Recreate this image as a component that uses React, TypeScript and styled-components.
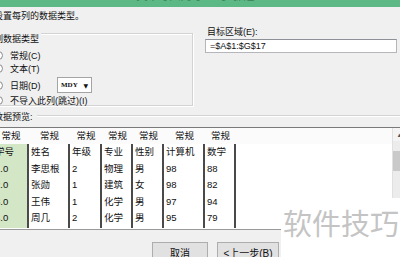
import React from "react";
import styled, { createGlobalStyle } from "styled-components";

const GlobalStyle = createGlobalStyle`
  html, body { margin: 0; padding: 0; background: #f0f0f0; }
  body { font-family: "Liberation Sans", "Noto Sans CJK SC", sans-serif; }
`;

const Page = styled.div`
  position: relative;
  width: 400px;
  height: 257px;
  overflow: hidden;
  background: #f0f0f0;
  color: #111;
`;

const TitleBar = styled.div`
  height: 7px;
  overflow: hidden;
  background: #5cb985;
  text-align: center;
  .title {
    display: block;
    margin-top: -10px;
    line-height: 12px;
    font-size: 11px;
    color: #3c7d55;
  }
`;

const Instruction = styled.div`
  margin: 2px 0 0 -6px;
  height: 14px;
  line-height: 14px;
  font-size: 9px;
  white-space: nowrap;
`;

const TopSection = styled.div`
  display: flex;
  align-items: flex-start;
  height: 84px;
`;

const GroupBox = styled.div`
  box-sizing: border-box;
  margin: 10px 0 0 -20px;
  width: 213px;
  height: 73px;
  border: 1px solid #d3d3d3;
  box-shadow: inset 1px 1px 0 #fff, 1px 1px 0 #fff;
  font-size: 9px;
`;

const Legend = styled.div`
  display: inline-block;
  margin: -8px 0 0 11px;
  padding: 0 2px;
  line-height: 12px;
  background: #f0f0f0;
  white-space: nowrap;
`;

const RadioList = styled.div`
  display: flex;
  flex-direction: column;
  margin-top: 4px;
  padding-left: 13px;
`;

const RadioRow = styled.div<{ $h: number; $mt?: number }>`
  display: flex;
  align-items: center;
  height: ${(p) => p.$h}px;
  margin-top: ${(p) => p.$mt ?? 0}px;
  white-space: nowrap;
`;

const Radio = styled.span<{ $checked?: boolean }>`
  box-sizing: border-box;
  width: 9px;
  height: 9px;
  margin-right: 7px;
  border: 1px solid #8a8a8a;
  border-radius: 50%;
  background: #fff;
  display: flex;
  align-items: center;
  justify-content: center;
  &::after {
    content: "";
    width: 3px;
    height: 3px;
    border-radius: 50%;
    background: ${(p) => (p.$checked ? "#222" : "transparent")};
  }
`;

const DateLabel = styled.span`
  width: 47px;
`;

const Select = styled.div`
  box-sizing: border-box;
  width: 35px;
  height: 16px;
  padding: 0 3px 0 3px;
  border: 1px solid #a4a4a4;
  background: #fff;
  display: flex;
  align-items: center;
  justify-content: space-between;
  font-family: "Liberation Serif", serif;
  font-weight: bold;
  font-size: 7px;
  .arrow { font-size: 6px; font-family: "DejaVu Sans", sans-serif; }
`;

const TargetPanel = styled.div`
  margin: 3px 0 0 12px;
  width: 192px;
  font-size: 9px;
`;

const TargetLabel = styled.div`
  line-height: 12px;
  padding-left: 2px;
  white-space: nowrap;
`;

const TextInput = styled.div`
  box-sizing: border-box;
  margin-top: 1px;
  height: 14px;
  padding-left: 4px;
  border: 1px solid #b4b6bb;
  border-top-color: #8d9096;
  background: #fff;
  line-height: 12px;
  font-size: 9px;
`;

const PreviewHeader = styled.div`
  display: flex;
  align-items: center;
  margin: 3px 0 0 -6px;
  height: 12px;
  font-size: 9px;
  white-space: nowrap;
  .line {
    flex: 1;
    margin-left: 4px;
    border-top: 1px solid #d3d3d3;
    border-bottom: 1px solid #fff;
  }
`;

const TableBox = styled.div`
  box-sizing: border-box;
  display: flex;
  margin: 5px 0 0 -8px;
  width: 415px;
  height: 103px;
  border: 1px solid #9a9a9a;
  border-top-color: #7a7a7a;
  background: #fff;
`;

const Grid = styled.div`
  flex: 1;
  font-size: 9.5px;
`;

const HeaderRow = styled.div`
  display: flex;
  height: 16px;
  background: #fbfbfb;
`;

const HeaderCell = styled.div<{ $w: number }>`
  width: ${(p) => p.$w}px;
  flex-shrink: 0;
  line-height: 16px;
  text-align: center;
  white-space: nowrap;
`;

const Body = styled.div`
  display: flex;
`;

const Column = styled.div<{ $w: number; $selected?: boolean }>`
  box-sizing: border-box;
  width: ${(p) => p.$w}px;
  flex-shrink: 0;
  padding-bottom: 1.5px;
  border-right: 2px solid #4a4a4a;
  background: ${(p) => (p.$selected ? "#d3e6c5" : "#fff")};
`;

const Cell = styled.div`
  height: 16.5px;
  line-height: 16.5px;
  padding-left: 2px;
  white-space: nowrap;
  overflow: hidden;
`;

const Scrollbar = styled.div`
  width: 13px;
  background: #ececec;
  display: flex;
  flex-direction: column;
  border-left: 1px solid #e0e0e0;
  .up {
    height: 13px;
    display: flex;
    align-items: center;
    justify-content: center;
    font-size: 6px;
    color: #555;
    background: #f4f4f4;
  }
  .thumb {
    margin-top: 10px;
    height: 20px;
    background: #c9c9c9;
  }
`;

const ButtonRow = styled.div`
  display: flex;
  gap: 9px;
  margin-top: 12px;
  padding-left: 152px;
`;

const Button = styled.div<{ $w: number }>`
  box-sizing: border-box;
  width: ${(p) => p.$w}px;
  height: 21px;
  border: 1px solid #adadad;
  background: #e1e1e1;
  display: flex;
  align-items: center;
  justify-content: center;
  font-size: 10px;
  white-space: nowrap;
`;

const Watermark = styled.div`
  position: absolute;
  left: 281px;
  top: 198px;
  right: 0;
  bottom: 0;
  padding: 10px 0 0 2px;
  background: #fff;
  color: #c4c4c4;
  font-family: "Noto Sans CJK SC", sans-serif;
  font-size: 29px;
  line-height: 29px;
  white-space: nowrap;
`;

const columns = [
  { w: 36, head: "学号", values: ["1.0", "2.0", "3.0", "4.0"], selected: true },
  { w: 41, head: "姓名", values: ["李思根", "张勋", "王伟", "周几"] },
  { w: 32, head: "年级", values: ["2", "1", "1", "2"] },
  { w: 31, head: "专业", values: ["物理", "建筑", "化学", "化学"] },
  { w: 31, head: "性别", values: ["男", "女", "男", "男"] },
  { w: 41, head: "计算机", values: ["98", "98", "97", "95"] },
  { w: 31, head: "数学", values: ["88", "82", "94", "79"] },
];

export default function App() {
  return (
    <Page>
      <GlobalStyle />
      <TitleBar>
        <span className="title">文本导入向导 - 3 步骤之 3</span>
      </TitleBar>
      <Instruction>设置每列的数据类型。</Instruction>

      <TopSection>
        <GroupBox>
          <Legend>列数据类型</Legend>
          <RadioList>
            <RadioRow $h={13}>
              <Radio $checked />
              常规(C)
            </RadioRow>
            <RadioRow $h={13}>
              <Radio />
              文本(T)
            </RadioRow>
            <RadioRow $h={16} $mt={2}>
              <Radio />
              <DateLabel>日期(D)</DateLabel>
              <Select>
                MDY<span className="arrow">▼</span>
              </Select>
            </RadioRow>
            <RadioRow $h={13} $mt={1}>
              <Radio />
              不导入此列(跳过)(I)
            </RadioRow>
          </RadioList>
        </GroupBox>

        <TargetPanel>
          <TargetLabel>目标区域(E):</TargetLabel>
          <TextInput>=$A$1:$G$17</TextInput>
        </TargetPanel>
      </TopSection>

      <PreviewHeader>
        数据预览:<span className="line" />
      </PreviewHeader>

      <TableBox>
        <Grid>
          <HeaderRow>
            {columns.map((c) => (
              <HeaderCell key={c.head} $w={c.w}>
                常规
              </HeaderCell>
            ))}
          </HeaderRow>
          <Body>
            {columns.map((c) => (
              <Column key={c.head} $w={c.w} $selected={c.selected}>
                <Cell>{c.head}</Cell>
                {c.values.map((v, i) => (
                  <Cell key={i}>{v}</Cell>
                ))}
              </Column>
            ))}
          </Body>
        </Grid>
        <Scrollbar>
          <span className="up">▲</span>
          <span className="thumb" />
        </Scrollbar>
      </TableBox>

      <ButtonRow>
        <Button $w={56}>取消</Button>
        <Button $w={62}>&lt;上一步(B)</Button>
      </ButtonRow>

      <Watermark>软件技巧</Watermark>
    </Page>
  );
}
